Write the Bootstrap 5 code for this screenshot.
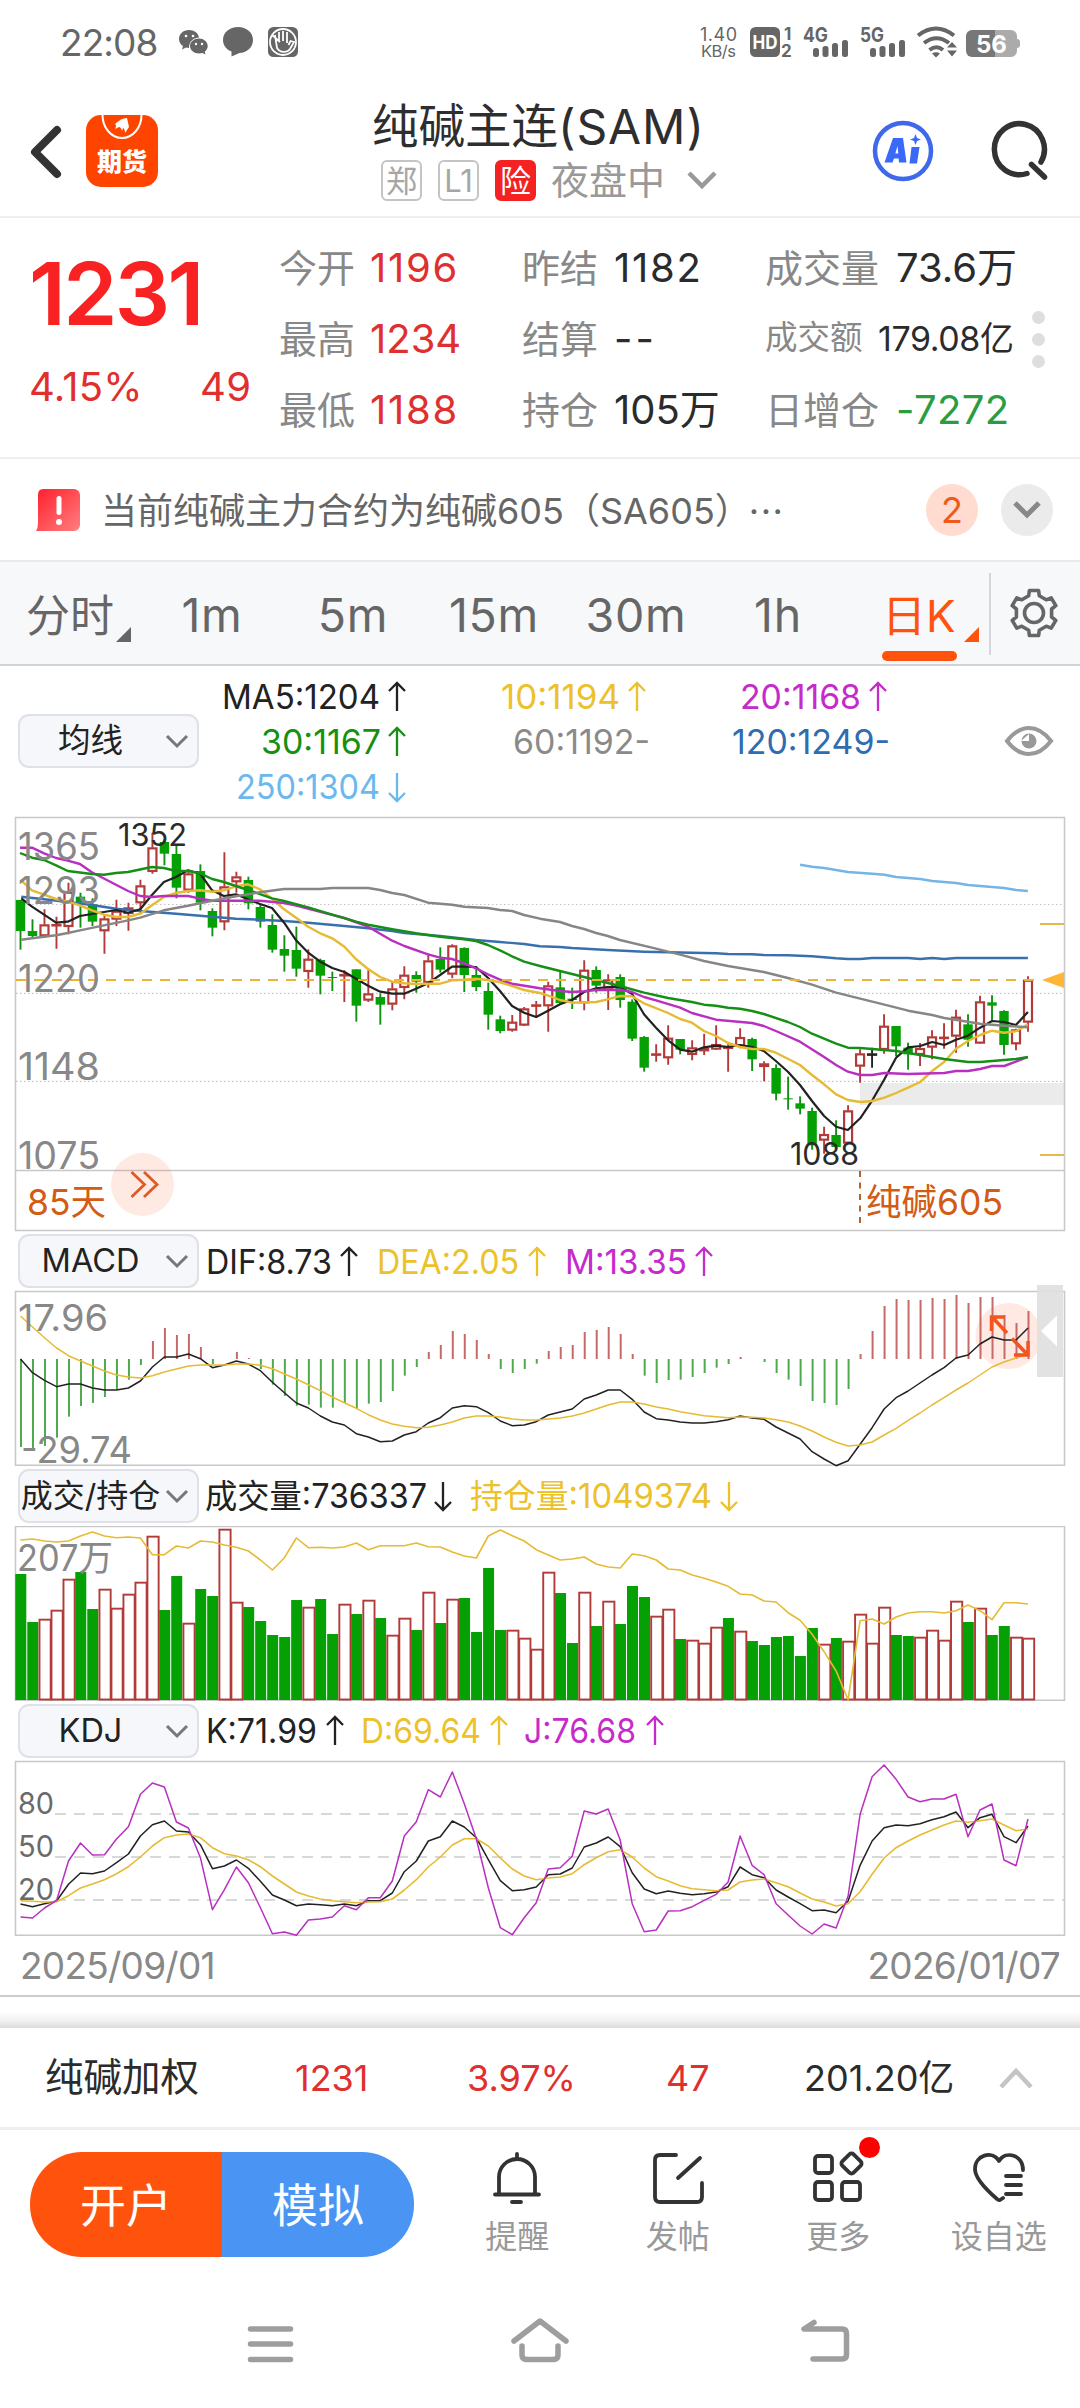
<!DOCTYPE html>
<html lang="zh-CN">
<head>
<meta charset="utf-8">
<meta name="viewport" content="width=device-width, initial-scale=1">
<title>纯碱主连(SAM)</title>
<link href="https://cdn.jsdelivr.net/npm/bootstrap@5.3.0/dist/css/bootstrap.min.css" rel="stylesheet">
<style>
body{width:1080px;height:2408px;overflow:hidden;background:#fff;color:#2b2b2b;font-family:Inter,"Noto Sans CJK SC",sans-serif;line-height:1;}
svg{display:block;flex:none}
svg text{font-family:Inter,"Noto Sans CJK SC",sans-serif}
.t{white-space:nowrap}
.red{color:#e02f2f}.grn{color:#2a9d41}.org{color:#ff530d}
/* status bar */
.statusbar{height:84px;padding-left:60px;color:#666}
.clock{font-size:37px;letter-spacing:-.9px;width:119px}
/* title bar */
.titlebar{height:134px;border-bottom:2px solid #efefef;padding-left:28px;padding-top:2px}
.logo{width:72px;height:72px;margin-left:22px}
.titles{width:621px;padding-left:214px}
.ttl{font-size:46.5px;color:#2e2e2e;height:50px}
.ttl b{font-weight:400;font-size:48px;letter-spacing:.9px}
.tagbox{width:41px;height:41px;border:2px solid #c4c4c4;border-radius:6px;color:#a6a6a6;font-size:31px}
.tagbox.hot{background:#f42222;border-color:#f42222;color:#fff}
/* quote */
.quote{height:241px;border-bottom:2px solid #efefef;padding-left:29px}
.bigp{font-size:87px;font-weight:600;color:#f82222;letter-spacing:-2.6px;height:80px}
.chg{font-size:40px;letter-spacing:.3px}
.qgrid{display:grid;grid-template-columns:91px 152px 92px 151px 131px 141px;grid-auto-rows:71px;align-items:center;font-size:38px}
.lab{color:#888}
.val{font-size:40px;letter-spacing:0}
.val.ones{letter-spacing:1.7px}
.sm{font-size:32.5px}
.dots i{display:block;width:13px;height:13px;border-radius:50%;background:#dedede;margin-bottom:9px}
/* notice */
.notice{height:101px;padding-left:35px;padding-top:1px;color:#666;font-size:36px}
.rnd{width:52px;height:52px;border-radius:50%}
/* tabs */
.tabsbar{height:106px;background:#f7f8fa;border-top:2px solid #e9eaec;border-bottom:2px solid #cfd2d8;font-size:44px;color:#666}
.tb{position:relative;height:100%;padding-top:5px}
.num{font-size:46.5px;letter-spacing:.7px}
.corner{position:absolute;right:0;bottom:22px}
.under{position:absolute;bottom:3px;height:10px;width:75px;border-radius:5px;background:#ff530d}
/* legends */
.pick{width:181px;height:54px;background:#f6f7fa;border:2px solid #dfe1e8;border-radius:11px;font-size:32.5px;color:#222;margin-left:18px}
.pick .t{width:141px;text-align:center}
.pick svg{margin-left:3px}
.leg svg.row3{margin-left:1px}
.frame{width:1080px}
/* bottom */
.dates{height:61px;font-size:37px;letter-spacing:-.75px;color:#888;padding:0 20px;border-bottom:2px solid #ccc}
.fade-top{height:31px;background:linear-gradient(#fff 45%,#f2f2f2 75%,#dcdcdc)}
.idx{height:102px;border-bottom:3px solid #eee;font-size:36px;display:grid;grid-template-columns:250px 172px 199px 138px 193px 80px;padding-left:45px;align-items:center}
.pillbtn{width:192px;height:105px;border:0;border-radius:0;color:#fff;font-size:46px;line-height:1}
.pillbtn.l{background:#ff530d;border-radius:52px 0 0 52px}
.pillbtn.r{background:#4a95f3;border-radius:0 52px 52px 0}
.act{width:160.5px;font-size:32px;color:#999}
.act .t{margin-top:10px}
.acts{padding-left:23px;margin-top:-1px}
.navsys{padding-top:51px}
</style>
</head>
<body>
<div class="d-flex flex-column">

<header class="statusbar d-flex align-items-center">
  <span class="clock t">22:08</span>
  <svg width="120" height="32" viewBox="179 26 120 32" fill="#666">
    <path d="M189 30c-6 0-10 4-10 9 0 3 1.500 5.500 4 7l-1 3.500 4-2 3 .5c0-7 5-10.500 10-10.500-.5-4.500-5-7.500-10-7.500z"/>
    <path d="M199 38.500c-5 0-9 3.300-9 7.500s4 7.500 9 7.500l3.500-.6 3 1.600-.8-2.800c1.800-1.400 3-3.400 3-5.700 0-4.200-4-7.500-8.700-7.500z"/>
    <g fill="#fff"><circle cx="186" cy="36" r="1.300"/><circle cx="193" cy="36" r="1.300"/><circle cx="196" cy="44" r="1.200"/><circle cx="202" cy="44" r="1.200"/></g>
    <path d="M238 27c8.500 0 15 5.500 15 13s-6.500 13-13.500 13l-8 3.500v-5c-5-2-8.500-6-8.500-11.500 0-7.500 6.500-13 15-13z"/>
    <rect x="268" y="27" width="30" height="30" rx="5.500"/>
    <circle cx="283" cy="42" r="13" fill="none" stroke="#fff" stroke-width="1.800"/>
    <path d="M275 35l2 13c3 5 10 5 13 1l4-7-3.500-1-2 4M272 35l8 7M279 32v9M283 31v10M287 32v11" fill="none" stroke="#fff" stroke-width="1.800"/>
  </svg>
  <svg class="ms-auto" width="326" height="36" viewBox="698 24 326 36" fill="#666" style="margin-right:56px">
    <text x="700" y="41" font-size="18" textLength="37">1.40</text><text x="701" y="57" font-size="16.500" textLength="35">KB/s</text>
    <rect x="750" y="27" width="30" height="30" rx="5.500"/><text x="752.500" y="49" font-size="19" font-weight="700" fill="#fff" textLength="25" lengthAdjust="spacingAndGlyphs">HD</text>
    <text x="784" y="39.500" font-size="17" font-weight="700">1</text><text x="781" y="57" font-size="17" font-weight="700">2</text>
    <text x="803" y="41.500" font-size="20" font-weight="700" textLength="25" lengthAdjust="spacingAndGlyphs">4G</text>
    <text x="860" y="41.500" font-size="20" font-weight="700" textLength="24" lengthAdjust="spacingAndGlyphs">5G</text>
    <g id="sig"><rect x="813" y="48" width="6" height="9" rx="2.500"/><rect x="822.500" y="46" width="6" height="11" rx="2.500"/><rect x="832" y="43" width="6" height="14" rx="2.500"/><rect x="842" y="40" width="6" height="17" rx="2.500"/></g>
    <use href="#sig" x="57"/>
    <g fill="none" stroke="#666" stroke-width="4"><path d="M918 35.500q18-14 36 0"/><path d="M924 43q12.500-9.500 25 0"/><path d="M929.500 50q7-5.500 13.500 0"/></g>
    <path d="M932 53.500q4-2.500 8 0l-4 4zM947 47.500l5-5.500 5 5.500zM947 50.500h10l-5 6z"/>
    <path d="M972 30h23v27h-23a6 6 0 0 1-6-6V36a6 6 0 0 1 6-6z" fill="#777"/>
    <path d="M995 30h16a6 6 0 0 1 6 6v3q3 0 3 3v3q0 3-3 3v3a6 6 0 0 1-6 6h-16z" fill="#ababab"/>
    <text x="976" y="52.500" font-size="24.500" font-weight="700" fill="#fff" textLength="31" lengthAdjust="spacingAndGlyphs">56</text>
  </svg>
</header>

<nav class="titlebar d-flex align-items-center">
  <svg width="36" height="56" viewBox="0 0 36 56" fill="none" stroke="#333" stroke-width="8" stroke-linecap="round" stroke-linejoin="round"><path d="M29 7L7 29l22 22"/></svg>
  <svg class="logo" viewBox="0 0 72 72"><rect width="72" height="72" rx="15" fill="#ff4400"/><path d="M16.500 0a19.500 23 0 0 0 39 0" fill="none" stroke="#fff" stroke-width="2"/><path d="M29 9q6-6 12-6l2 9-4 6q0-4-2-5l-1 3q-1-4-3-4l-4 2q2-4 0-5z" fill="#fff"/><text x="11" y="56" font-size="25" font-weight="900" fill="#fff" textLength="50" lengthAdjust="spacingAndGlyphs">期货</text></svg>
  <div class="titles d-flex flex-column">
    <div class="ttl t d-flex align-items-center">纯碱主连<b>(SAM)</b></div>
    <div class="d-flex align-items-center mt-2" style="padding-left:9px">
      <span class="tagbox d-flex align-items-center justify-content-center">郑</span>
      <span class="tagbox d-flex align-items-center justify-content-center" style="margin-left:16px">L1</span>
      <span class="tagbox hot d-flex align-items-center justify-content-center" style="margin-left:16px">险</span>
      <span class="t" style="font-size:38px;color:#999;margin-left:15px">夜盘中</span>
      <svg width="34" height="24" viewBox="0 0 34 24" fill="none" stroke="#999" stroke-width="4.500" style="margin-left:20px"><path d="M4 5l13 13L30 5"/></svg>
    </div>
  </div>
  <svg width="64" height="64" viewBox="0 0 64 64" style="margin-left:92px"><circle cx="32" cy="32" r="28" fill="none" stroke="#3f69ea" stroke-width="4.500"/><g fill="#3a68f8" fill-rule="evenodd"><path d="M22 19h10l3.500 24.500h-7.500l-.4-4h-4.600l-1.500 4h-8zM26.500 27l-2.200 7.500h3z"/><path d="M40.500 28h8l-2.500 16.500h-7.500zM44.500 15l1.500 4 4 1.500-4 1.500-1.500 4-1.500-4-4-1.500 4-1.500z"/></g></svg>
  <svg width="64" height="64" viewBox="0 0 64 64" fill="none" stroke="#333" stroke-width="5.500" stroke-linecap="round" style="margin-left:53px"><path d="M39 54.500A25 25.500 0 1 1 53 43"/><path d="M43.500 45.500L56.500 58"/></svg>
</nav>

<section class="quote d-flex">
  <div class="d-flex flex-column" style="width:250px;padding-top:35px">
    <span class="bigp t d-flex align-items-center">1231</span>
    <div class="chg red d-flex align-items-center" style="height:40px;margin-top:34px"><span class="t" style="width:171px">4.15%</span><span class="t">49</span></div>
  </div>
  <div class="qgrid" style="padding-top:14px">
    <span class="lab t">今开</span><span class="val ones t red">1196</span><span class="lab t">昨结</span><span class="val ones t">1182</span><span class="lab t">成交量</span><span class="val t">73.6万</span>
    <span class="lab t">最高</span><span class="val t red">1234</span><span class="lab t">结算</span><span class="val t" style="letter-spacing:3px">--</span><span class="d-flex align-items-center sm"><span class="lab t" style="width:114px">成交额</span></span><span class="t" style="font-size:34px;margin-left:-18px;letter-spacing:-.4px">179.08亿</span>
    <span class="lab t">最低</span><span class="val ones t red">1188</span><span class="lab t">持仓</span><span class="val t">105万</span><span class="lab t">日增仓</span><span class="val t grn" style="letter-spacing:.4px">-7272</span>
  </div>
  <div class="dots d-flex flex-column justify-content-center" style="margin-left:-5px;padding-top:4px"><i></i><i></i><i class="mb-0"></i></div>
</section>

<section class="notice d-flex align-items-center">
  <svg width="46" height="44" viewBox="0 0 46 44"><defs><linearGradient id="ng" x1="0" y1="0" x2="1" y2="1"><stop offset="0" stop-color="#ff1f2c"/><stop offset="1" stop-color="#ff7f80"/></linearGradient></defs><path d="M8 1h31a6 6 0 0 1 6 6v30a6 6 0 0 1-6 6H1q2-3 2-8V7q0-6 5-6z" fill="url(#ng)"/><rect x="21.500" y="8" width="5" height="19" rx="2.500" fill="#fff"/><circle cx="24" cy="34" r="3" fill="#fff"/></svg>
  <span class="t" style="margin-left:20px;width:801px;padding-top:2px">当前纯碱主力合约为纯碱605（SA605）<span style="margin-left:16px;letter-spacing:1.500px">···</span></span>
  <span class="rnd d-flex align-items-center justify-content-center" style="background:#ffdccf;color:#ee5a1c;margin-left:24px">2</span>
  <span class="rnd d-flex align-items-center justify-content-center" style="background:#ebebeb;margin-left:23px"><svg width="32" height="22" viewBox="0 0 32 22" fill="none" stroke="#888" stroke-width="5"><path d="M4 4l12 12L28 4"/></svg></span>
</section>

<nav class="tabsbar d-flex">
  <span class="tb d-flex align-items-center" style="padding-left:26px;width:131px">分时<svg class="corner" width="15" height="15" fill="#666"><path d="M15 0v15H0z"/></svg></span>
  <span class="tb num d-flex align-items-center justify-content-center" style="width:162px">1m</span>
  <span class="tb num d-flex align-items-center justify-content-center" style="width:120px">5m</span>
  <span class="tb num d-flex align-items-center justify-content-center" style="width:162px">15m</span>
  <span class="tb num d-flex align-items-center justify-content-center" style="width:122px">30m</span>
  <span class="tb num d-flex align-items-center justify-content-center" style="width:162px">1h</span>
  <span class="tb d-flex align-items-center org" style="padding-left:23px;width:120px">日K<i class="under" style="left:23px"></i><svg class="corner" width="15" height="15" fill="#ff530d"><path d="M15 0v15H0z"/></svg></span>
  <span style="width:2px;height:82px;background:#d4d7dc;margin:11px 0 0 10px"></span>
  <svg width="52" height="52" viewBox="-26 -26 52 52" fill="none" stroke="#666" stroke-width="3.600" stroke-linejoin="round" style="margin:25px 0 0 17px"><path id="gear"/><circle r="9.500"/></svg>
</nav>

<section class="d-flex align-items-center" style="height:150px">
  <div class="pick d-flex align-items-center"><span class="t">均线</span><svg width="26" height="16" viewBox="0 0 26 16" fill="none" stroke="#777" stroke-width="3"><path d="M3 3l10 10L23 3"/></svg></div>
  <div id="ma" style="margin-left:1px"></div>
  <svg width="50" height="34" viewBox="0 0 50 34" style="margin-left:117px"><path d="M3 17Q13 4 25 4t22 13Q37 30 25 30T3 17z" fill="none" stroke="#999" stroke-width="4"/><circle cx="25" cy="17" r="7.500" fill="#999"/><path d="M25 10v7h-8z" fill="#fff"/></svg>
</section>

<svg class="frame" height="416" viewBox="0 815 1080 416" id="kchart"></svg>

<section class="d-flex align-items-center leg" style="height:58px">
  <div class="pick d-flex align-items-center"><span class="t">MACD</span><svg width="26" height="16" viewBox="0 0 26 16" fill="none" stroke="#777" stroke-width="3"><path d="M3 3l10 10L23 3"/></svg></div>
  <svg width="520" height="50" viewBox="200 1236 520 50" class="row3" data-items='[["c0","DIF:8.73",206,332,"u",349],["c1","DEA:2.05",377,519,"u",537],["c2","M:13.35",565,687,"u",704]]' data-y="1274"></svg>
</section>
<svg class="frame" height="176" viewBox="0 1289 1080 176" id="macd"></svg>

<section class="d-flex align-items-center leg" style="height:60px">
  <div class="pick d-flex align-items-center"><span class="t" style="font-size:32px">成交/持仓</span><svg width="26" height="16" viewBox="0 0 26 16" fill="none" stroke="#777" stroke-width="3"><path d="M3 3l10 10L23 3"/></svg></div>
  <svg width="560" height="50" viewBox="200 1471 560 50" class="row3" data-items='[["c0","成交量:736337",205,427,"d",443],["c1","持仓量:1049374",470,712,"d",729]]' data-y="1508"></svg>
</section>
<svg class="frame" height="176" viewBox="0 1525 1080 176" id="vol"></svg>

<section class="d-flex align-items-center leg" style="height:58px">
  <div class="pick d-flex align-items-center"><span class="t">KDJ</span><svg width="26" height="16" viewBox="0 0 26 16" fill="none" stroke="#777" stroke-width="3"><path d="M3 3l10 10L23 3"/></svg></div>
  <svg width="520" height="50" viewBox="200 1706 520 50" class="row3" data-items='[["c0","K:71.99",206,317,"u",335],["c1","D:69.64",361,481,"u",499],["c2","J:76.68",524,636,"u",655]]' data-y="1743"></svg>
</section>
<svg class="frame" height="176" viewBox="0 1759 1080 176" id="kdj"></svg>

<div class="dates d-flex align-items-center justify-content-between"><span class="t">2025/09/01</span><span class="t">2026/01/07</span></div>
<div class="fade-top"></div>
<section class="idx">
  <span class="t" style="font-size:38.500px">纯碱加权</span><span class="t red">1231</span><span class="t red">3.97%</span><span class="t red">47</span><span class="t">201.20亿</span>
  <svg width="38" height="26" viewBox="0 0 38 26" fill="none" stroke="#c4c4c4" stroke-width="4.500"><path d="M4 22L19 6l15 16"/></svg>
</section>

<footer class="d-flex" style="height:133px;padding-top:22px">
  <div class="d-flex" style="margin-left:30px"><button class="pillbtn l">开户</button><button class="pillbtn r">模拟</button></div>
  <div class="acts d-flex">
    <div class="act d-flex flex-column align-items-center"><svg width="56" height="60" viewBox="0 0 56 60" fill="none" stroke="#333" stroke-width="3.800" stroke-linecap="round"><path d="M28 3v5M10 42V26a18 18 0 0 1 36 0v16M6 43.500h44M23 51h9"/></svg><span class="t">提醒</span></div>
    <div class="act d-flex flex-column align-items-center"><svg width="56" height="60" viewBox="0 0 56 60" fill="none" stroke="#333" stroke-width="3.800" stroke-linecap="round" stroke-linejoin="round"><path d="M26 4H10q-5 0-5 5v37q0 5 5 5h37q5 0 5-5V32M50 7L28 27"/></svg><span class="t">发帖</span></div>
    <div class="act d-flex flex-column align-items-center position-relative"><svg width="56" height="60" viewBox="0 0 56 60" fill="none" stroke="#333" stroke-width="3.800" stroke-linejoin="round"><rect x="5" y="5" width="17" height="17" rx="3"/><rect x="5" y="31" width="17" height="18" rx="3"/><rect x="32" y="31" width="18" height="18" rx="3"/><rect x="33.500" y="4.500" width="16" height="16" rx="3" transform="rotate(45 41.500 12.500)"/></svg><i class="position-absolute rounded-circle" style="width:21px;height:21px;background:#fe0000;right:39px;top:-14px"></i><span class="t">更多</span></div>
    <div class="act d-flex flex-column align-items-center"><svg width="56" height="60" viewBox="0 0 56 60" fill="none" stroke="#333" stroke-width="3.800" stroke-linecap="round" stroke-linejoin="round"><path d="M32 47l-3 2q-1.500.5-3-1Q4 29 4 18C4 4 21-1 28 10c7-11 24-6 24 9M35 25h15M35 34h15M35 43h15"/></svg><span class="t">设自选</span></div>
  </div>
</footer>
<div class="navsys d-flex">
  <svg width="1080" height="60" viewBox="0 2315 1080 60" fill="none" stroke="#9e9e9e" stroke-width="5.500" stroke-linecap="round" stroke-linejoin="round"><path d="M250.500 2330h40M250.500 2345h40M250.500 2360.500h40M514 2342l26-20 26 20M522 2347v9q0 4.500 4.500 4.500h27q4.500 0 4.500-4.500v-9M814 2323.500l-10 6.500h38q4.500 0 4.500 4.500v21q0 4.500-4.500 4.500h-29"/></svg>
</div>
</div>

<script src="https://cdn.jsdelivr.net/npm/bootstrap@5.3.0/dist/js/bootstrap.bundle.min.js"></script>
<script>
var N=85, X=function(i){return 20.5+11.994*i;};
var C={k:'#222',y:'#e6bb33',m:'#b92fc0',g:'#158f15',gr:'#868686',b:'#3a6fae',lb:'#74b5e6',r:'#b23a38',G:'#04a004'};
function line(p,c,w){return '<polyline fill="none" stroke="'+c+'" stroke-width="'+w+'" stroke-linejoin="round" points="'+p.map(function(q){return q[0].toFixed(1)+','+q[1].toFixed(1);}).join(' ')+'"/>';}
function frame(y1,y2){return '<path d="M15.500 '+y1+'H1064.500V'+y2+'H15.500z" fill="none" stroke="#c8c8c8" stroke-width="1.500"/>';}
function txt(x,y,s,w,t,c){return '<text x="'+x+'" y="'+y+'" font-size="'+s+'" fill="'+c+'" textLength="'+w+'" lengthAdjust="spacingAndGlyphs">'+t+'</text>';}
function arrow(x,y,dir,c){var s=dir=='u'?1:-1;return '<path d="M'+x+' '+(y-14*s)+'V'+(y+14*s)+'M'+(x-8)+' '+(y-6*s)+'L'+x+' '+(y-14*s)+'L'+(x+8)+' '+(y-6*s)+'" fill="none" stroke="'+c+'" stroke-width="2.300"/>';}
var legc={c0:'#222',c1:'#ecc12a',c2:'#c52bcb',c3:'#159012',c4:'#8a8a8a',c5:'#2f6cb0',c6:'#6bb8ee'};

/* moving average legend */
var ma=[['c0','MA5:1204',222,380,397,'u',698],['c1','10:1194',501,620,637,'u',698],['c2','20:1168',740,861,878,'u',698],['c3','30:1167',261,381,397,'u',743],['c4','60:1192-',513,650,0,'',743],['c5','120:1249-',732,890,0,'',743],['c6','250:1304',236,380,397,'d',788]];
document.getElementById('ma').innerHTML='<svg width="687" height="140" viewBox="200 672 687 140" overflow="visible">'+ma.map(function(a){return txt(a[2],a[6]+12,33.5,a[3]-a[2],a[1],legc[a[0]])+(a[5]?arrow(a[4],a[6],a[5],legc[a[0]]):'');}).join('')+'</svg>';
document.querySelectorAll('.row3').forEach(function(s){var y=+s.dataset.y;s.innerHTML=JSON.parse(s.dataset.items).map(function(a){return txt(a[2],y,33.5,a[3]-a[2],a[1],legc[a[0]])+arrow(a[5],y-12,a[4],legc[a[0]]);}).join('');});

/* gear outline */
(function(){var d='',R=23,r=18;for(var i=0;i<6;i++){var a=i*Math.PI/3-Math.PI/2;[[-.2,R],[.2,R],[.3,r],[Math.PI/3-.3,r]].forEach(function(p,j){var t=a+p[0];d+=(d?'L':'M')+(p[1]*Math.cos(t)).toFixed(1)+' '+(p[1]*Math.sin(t)).toFixed(1);});}document.getElementById('gear').setAttribute('d',d+'z');})();

/* candles: direction, high, body top, body bottom, low */
var K='g267,267,360,416 g325,360,375,380 r295,341,375,380 r317,340,343,413 r215,243,347,370 g245,257,275,350 g262,280,332,345 r310,323,360,428 r266,300,325,345 r275,290,308,359 r206,224,276,310 r65,110,182,188 g85,93,128,163 g105,129,230,262 r178,188,238,245 g160,180,275,298 g292,300,350,376 r124,227,333,358 r182,197,213,245 g197,207,277,295 g278,288,332,350 g310,342,416,425 g373,414,434,482 g347,417,473,497 r415,444,482,530 g443,447,494,550 g482,498,500,540 r478,490,493,573 g475,475,584,632 r478,548,568,573 g547,558,581,641 r510,533,580,598 r466,492,530,565 g481,492,512,545 r428,449,515,530 g409,444,476,485 r400,404,490,502 g409,411,492,543 g466,492,528,540 g515,540,611,656 g614,625,660,667 r612,633,658,662 r588,593,643,645 r570,581,585,620 r512,524,585,662 g482,529,576,580 g530,563,567,594 r448,477,576,598 g466,477,524,545 r490,506,537,597 g490,498,567,590 g565,572,683,690 g675,678,770,782 r700,728,731,752 r643,681,741,761 g684,684,716,730 r688,710,731,748 r668,712,720,732 r643,700,715,717 r700,706,713,782 r652,679,706,712 g680,684,745,780 r751,758,767,811 g760,771,848,868 g797,862,865,896 g856,877,893,910 g890,900,1003,1016 r947,970,988,1028 g928,972,1008,1012 r883,899,997,998 r715,728,766,815 k710,728,732,770 r610,645,716,728 g645,645,706,735 g695,710,730,776 r696,712,731,765 r658,677,709,745 r637,678,683,713 r596,618,676,725 g610,640,686,707 r554,572,697,698 g553,574,584,628 g598,600,702,731 r653,656,699,718 r496,507,634,662'.split(' ');
var P=function(z){return 810+z/3;};
function zl(s,c,w){return line(s.trim().split(/\s+/).map(function(q){var b=q[0]=='+';var a=q.replace('+','').split(',');return [(+a[0])/2.904+(b?540:0),P(+a[1])];}),c,w);}
var L={
b:'62,257 128,265 197,273 267,282 337,293 407,300 511,308 616,317 685,323 755,326 825,330 895,335 1000,345 1069,352 1139,360 1174,366 1278,375 1382,387 1452,393 1522,399 1568,406 +58,408 +93,411 +197,417 +302,422 +372,424 +511,427 +546,429 +616,430 +650,432 +720,433 +790,436 +860,442 +894,444 +930,444 +965,441 +1069,441 +1104,444 +1139,441 +1174,444 +1208,441 +1417,441',
lb:'+755,161 +790,167 +825,171 +894,183 +965,188 +1000,191 +1034,198 +1104,204 +1139,210 +1208,216 +1243,222 +1348,231 +1382,237 +1417,240',
k:'62,262 93,287 128,311 163,335 197,332 232,315 267,309 302,303 337,297 372,305 407,295 441,252 476,213 511,198 546,178 581,188 616,238 650,255 685,250 720,265 755,279 790,291 825,335 860,388 895,425 930,452 965,471 1000,483 1034,503 1069,524 1104,542 1139,548 1174,548 1208,533 1243,517 1278,492 1313,467 1348,467 1382,468 1417,500 1452,540 1487,585 1522,605 1557,618 +22,600 +58,580 +93,567 +128,543 +163,532 +197,528 +232,527 +267,548 +302,610 +337,650 +372,688 +407,716 +441,722 +476,709 +511,704 +546,708 +581,702 +616,708 +650,720 +685,750 +720,782 +755,822 +790,870 +825,915 +860,947 +894,957 +930,922 +965,868 +1000,805 +1034,740 +1069,709 +1104,705 +1139,693 +1174,702 +1208,686 +1243,674 +1278,650 +1313,630 +1348,633 +1382,642 +1417,603',
y:'62,209 93,238 128,251 163,264 197,272 232,283 267,298 302,311 337,318 372,318 407,308 441,283 476,258 511,246 546,240 581,238 616,242 650,238 685,226 720,220 755,235 790,263 825,295 860,320 895,347 930,367 965,382 1000,407 1034,445 1069,474 1104,498 1139,512 1174,517 1208,519 1243,518 1278,518 1313,508 1348,506 1382,503 1417,507 1452,514 1487,525 1522,537 1568,546 +22,553 +58,567 +93,575 +163,573 +197,565 +232,555 +267,556 +302,577 +372,606 +407,624 +441,635 +476,660 +511,675 +546,696 +581,708 +616,714 +650,714 +685,725 +755,762 +790,792 +825,820 +860,850 +894,867 +930,873 +965,870 +1000,860 +1034,846 +1069,830 +1104,813 +1139,780 +1174,752 +1208,713 +1243,690 +1278,672 +1313,659 +1348,665 +1382,661 +1417,640',
m:'58,110 93,110 128,127 163,141 197,149 232,159 267,184 337,221 372,240 407,255 441,258 476,255 546,255 581,263 616,269 755,269 825,276 860,284 1000,321 1069,347 1139,389 1174,405 1243,430 1278,440 1313,444 1348,457 1382,472 1417,490 1452,506 1487,518 1568,532 +58,540 +93,543 +128,541 +163,537 +232,536 +267,543 +302,558 +337,568 +407,590 +441,606 +511,626 +616,636 +650,645 +685,660 +755,692 +825,738 +860,762 +894,782 +930,792 +965,792 +1000,786 +1069,789 +1174,786 +1208,780 +1243,780 +1278,774 +1313,765 +1348,765 +1382,752 +1417,738',
g:'58,126 93,140 128,147 163,163 197,180 267,189 302,191 337,186 372,183 441,168 476,171 511,180 546,180 581,187 616,204 650,213 720,237 790,262 825,270 895,289 965,311 1034,332 1069,341 1139,355 1208,367 1278,377 1348,385 1382,390 1417,402 1452,418 1487,436 1522,452 1568,465 +58,480 +163,507 +232,525 +302,545 +372,561 +441,573 +476,581 +511,584 +546,590 +581,593 +616,600 +650,609 +720,633 +755,648 +790,668 +825,683 +860,698 +894,710 +930,711 +1034,720 +1104,732 +1174,744 +1243,753 +1278,753 +1348,747 +1382,744 +1417,738',
gr:'62,386 93,382 163,373 197,366 232,358 302,343 372,328 407,320 476,298 546,284 616,269 685,256 755,244 825,234 930,234 965,231 1069,231 1104,237 1139,246 1174,252 1243,275 1313,281 1348,287 1417,291 1452,297 1487,300 1522,312 1568,323 +58,333 +93,345 +128,354 +163,366 +197,375 +232,387 +337,413 +407,431 +476,450 +546,465 +650,483 +720,501 +790,521 +860,545 +930,563 +1000,581 +1069,599 +1139,612 +1174,621 +1278,638 +1348,644 +1417,649'};
var s='<rect x="860" y="1082" width="204" height="22" fill="#ebebeb"/>';
[903.5,992.3,1080.3].forEach(function(y){s+='<path d="M16 '+y+'H1064" stroke="#c4c4c4" stroke-width="1.200" stroke-dasharray="1.500 2.500"/>';});
s+=frame(816.5,1229.5)+'<path d="M16 1169.500H1064" stroke="#c8c8c8" stroke-width="1.300"/>';
K.forEach(function(q,i){var t=q[0],a=q.slice(1).split(',').map(Number).map(P),x=X(i);
 if(t=='g'){s+='<path d="M'+x+' '+a[0]+'V'+a[3]+'" stroke="#129012" stroke-width="1.900"/><rect x="'+(x-4.7)+'" y="'+a[1]+'" width="9.400" height="'+Math.max(1,a[2]-a[1])+'" fill="'+C.G+'"/>';}
 else{var c=t=='r'?C.r:'#222';s+='<path d="M'+x+' '+a[0]+'V'+a[1]+'M'+x+' '+a[2]+'V'+a[3]+'" stroke="'+c+'" stroke-width="1.900"/><rect x="'+(x-4)+'" y="'+(a[1]+.7)+'" width="8" height="'+Math.max(.4,a[2]-a[1]-1.4)+'" fill="#fff" stroke="'+c+'" stroke-width="2.200"/>';}
});
s+=zl(L.b,C.b,2.4)+zl(L.lb,C.lb,2.4)+zl(L.k,C.k,2.2)+zl(L.y,C.y,2.4)+zl(L.m,C.m,2.4)+zl(L.g,C.g,2.4)+zl(L.gr,C.gr,2.4);
s+='<path d="M16 979H1042" stroke="#edb23c" stroke-width="2.200" stroke-dasharray="10 8"/><path d="M1040 923H1064M1040 1154H1064" stroke="#e6b84a" stroke-width="2"/><path d="M1042 979l22-8v16z" fill="#ffb536"/>';
[[859,'1365'],[902.5,'1293'],[991,'1220'],[1079,'1148'],[1168,'1075']].forEach(function(a){s+=txt(18,a[0],37.5,82,a[1],'#888');});
s+=txt(118,845,30.5,69,'1352','#2b2b2b')+txt(790,1163.500,30.5,69,'1088','#2b2b2b');
s+=txt(27,1214,36,79,'85天','#d35b14')+txt(866,1214,36,137,'纯碱605','#d35b14')+'<path d="M860 1170V1224" stroke="#b4632c" stroke-width="2" stroke-dasharray="6 5.500"/>';
s+='<circle cx="142.500" cy="1183.500" r="31.500" fill="#ff6a3a" fill-opacity=".14"/><path d="M131.500 1171l13 12.500-13 12.500M144 1171l13 12.500-13 12.500" fill="none" stroke="#e05a24" stroke-width="2.800"/>';
document.getElementById('kchart').innerHTML=s;

function ser(a,f){return a.map(function(v,i){return [X(i),f(v)];});}
/* MACD */
var H=[648,652,645,620,557,525,516,498,475,446,402,330,291,312,309,348,399,384,363,381,414,461,495,524,521,530,530,516,533,518,513,480,434,408,363,342,300,309,327,369,414,426,414,398,360,348,342,303,297,288,309,369,434,456,447,446,438,426,410,399,378,384,393,426,446,465,510,516,522,474,369,300,225,204,207,207,201,204,192,216,198,198,252,276,240];
var DIF=[384,425,448,467,459,459,471,477,477,471,450,408,378,378,369,383,410,402,390,399,419,454,485,516,531,555,573,582,608,618,632,630,612,602,576,560,531,524,527,545,570,584,582,572,552,543,534,504,492,477,477,505,543,563,567,573,576,576,572,566,555,561,565,588,606,624,662,684,704,689,640,590,534,500,480,456,432,410,381,372,339,318,327,327,291];
var DEA=[255,288,320,351,374,390,405,420,432,438,441,434,423,414,405,402,402,402,399,399,403,413,429,444,461,479,498,515,532,551,567,579,586,590,589,582,573,561,555,555,558,564,567,567,564,561,555,546,534,522,513,513,519,528,534,542,548,554,557,560,558,559,561,566,573,585,600,618,634,645,642,633,612,592,568,546,522,500,477,456,432,408,393,381,370];
var Q=function(z){return 1230+z/3;};
s=frame(1290.5,1464.2)+'<circle cx="1008.500" cy="1335" r="33" fill="#ff6a3a" fill-opacity=".15"/>';
H.forEach(function(v,i){if(v!=384)s+='<path d="M'+(X(i)+.5)+' 1358V'+Q(v)+'" stroke="'+(v>384?'#4fa94f':'#c46a68')+'" stroke-width="2"/>';});
s+=line(ser(DIF,Q),C.k,1.5)+line(ser(DEA,Q),C.y,1.5);
s+=txt(18,1330,37,90,'17.96','#888')+txt(21,1462,37,111,'-29.74','#888');
s+='<path d="M1007 1332l-14-15M991.500 1330v-14h13M1012 1337.500l15 15.500M1014 1354h14v-14" fill="none" stroke="#f4551e" stroke-width="3.500"/>';
s+='<rect x="1037" y="1284" width="26" height="92" fill="#e0e0e0" fill-opacity=".92"/><path d="M1041 1330l16-15.500v31z" fill="#fff"/>';
var m=document.getElementById('macd');m.innerHTML=s;m.style.overflow='visible';m.style.position='relative';

/* volume and open interest */
var V='g1029 g1173 r1166 r1139 r1046 g1023 g1134 r1076 r1133 r1091 r1055 r917 g1137 g1035 r1178 g1074 g1095 r896 r1115 g1128 g1170 g1212 g1218 g1107 r1130 g1104 g1209 r1121 g1149 r1109 g1161 r1214 r1163 g1197 r1085 g1176 r1106 g1101 g1203 g1011 g1197 r1199 r1223 r1256 r1025 g1086 g1236 r1085 g1185 r1112 g1179 g1065 g1098 r1157 r1136 g1224 r1229 r1238 r1190 g1161 r1202 g1230 g1242 g1218 g1215 g1275 g1191 r1241 g1221 r1232 r1151 r1238 r1130 g1212 g1215 r1220 r1199 r1229 r1112 g1173 r1133 g1212 g1185 r1220 r1223'.split(' ');
var OI=[927,924,930,933,930,915,903,915,920,918,921,971,971,945,951,930,933,942,949,960,987,1017,980,921,950,949,951,948,936,956,944,944,944,936,947,948,963,975,981,915,897,914,930,956,972,987,984,978,999,1008,1011,969,974,987,1014,1017,1032,1042,1053,1066,1089,1092,1110,1113,1145,1168,1210,1262,1320,1406,1169,1164,1179,1158,1146,1142,1142,1146,1139,1122,1139,1166,1115,1115,1119];
s=frame(1525.5,1699.3)+'<g>';
V.forEach(function(v,i){var y=Q(+v.slice(1)),x=X(i);
 s+=v[0]=='g'?'<rect x="'+(x-5.2)+'" y="'+y+'" width="11" height="'+(1699-y)+'" fill="'+C.G+'"/>'
 :'<rect x="'+(x-5)+'" y="'+y+'" width="11.200" height="'+(1698.5-y)+'" fill="#fff" stroke="'+C.r+'" stroke-width="1.900"/>';});
s+='</g>'+line(ser(OI,Q),C.y,1.6)+txt(17,1570,36.5,96,'207万','#888');
document.getElementById('vol').innerHTML=s;

/* KDJ */
var KK=[609,617,608,600,550,516,518,510,485,459,405,371,360,390,393,431,503,495,477,502,541,582,597,614,609,611,614,609,614,599,599,576,512,480,420,407,360,378,410,476,539,569,566,558,521,519,501,438,426,408,437,515,564,578,570,577,581,578,573,557,498,521,530,567,588,608,629,627,635,600,493,420,380,372,374,368,356,347,333,380,350,340,407,425,375];
var DD=[599,601,603,602,584,561,549,536,518,497,468,435,410,402,399,410,440,458,465,476,497,525,549,573,585,594,599,602,605,603,602,594,567,536,498,468,432,413,413,435,471,504,525,536,531,528,518,491,470,452,446,468,501,527,540,554,563,566,569,567,543,537,534,545,557,576,594,603,615,608,572,520,471,440,420,402,387,372,360,364,359,354,372,389,384];
var JJ=[648,651,621,599,480,426,462,461,414,377,280,246,258,363,381,470,626,566,498,545,620,698,693,703,657,654,648,614,626,590,590,540,405,362,266,288,213,308,413,560,680,701,650,605,504,500,466,330,339,324,417,608,692,687,630,629,617,598,580,543,405,493,521,608,642,675,699,669,681,585,340,227,192,235,288,302,294,294,280,407,327,309,477,494,354];
var R=function(z){return 1700+z/3;};
s=frame(1760.5,1934.2);
[1813,1856,1899].forEach(function(y,i){s+='<path d="M55 '+y+'H1064" stroke="#d8d8d8" stroke-width="1.800" stroke-dasharray="11 8"/>';});
s+=line(ser(KK,R),C.k,1.5)+line(ser(DD,R),C.y,1.6)+line(ser(JJ,R),C.m,1.5);
[[1813,'80'],[1856,'50'],[1899,'20']].forEach(function(a){s+=txt(18,a[0],29.5,36,a[1],'#6a6a6a');});
document.getElementById('kdj').innerHTML=s;
</script>
</body>
</html>
